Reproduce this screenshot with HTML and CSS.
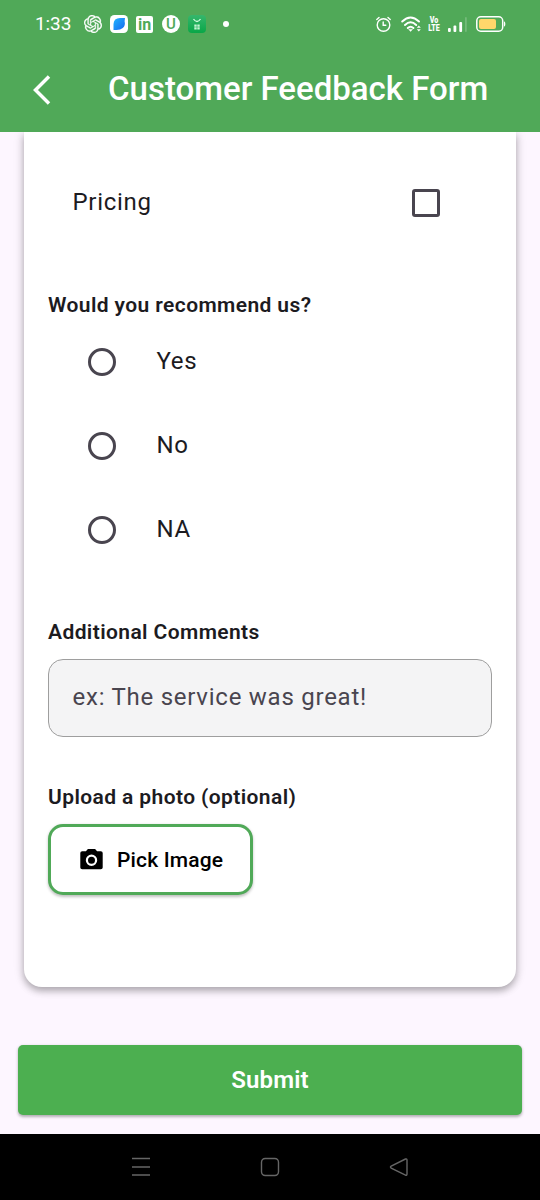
FILE: index.html
```html
<!DOCTYPE html>
<html lang="en">
<head>
<meta charset="utf-8">
<title>Customer Feedback Form</title>
<link rel="stylesheet" href="styles.css">
</head>
<body>
<header class="top">
  <div class="status">
    <span class="clock">1:33</span>
    <div class="notifications">
      <svg width="18" height="18" viewBox="0 0 24 24" fill="#fff" stroke="#fff" stroke-width=".35">
        <path d="M22.2819 9.8211a5.9847 5.9847 0 0 0-.5157-4.9108 6.0462 6.0462 0 0 0-6.5098-2.9A6.0651 6.0651 0 0 0 4.9807 4.1818a5.9847 5.9847 0 0 0-3.9977 2.9 6.0462 6.0462 0 0 0 .7427 7.0966 5.98 5.98 0 0 0 .511 4.9107 6.051 6.051 0 0 0 6.5146 2.9001A5.9847 5.9847 0 0 0 13.2599 24a6.0557 6.0557 0 0 0 5.7718-4.2058 5.9894 5.9894 0 0 0 3.9977-2.9001 6.0557 6.0557 0 0 0-.7475-7.0729zm-9.022 12.6081a4.4755 4.4755 0 0 1-2.8764-1.0408l.1419-.0804 4.7783-2.7582a.7948.7948 0 0 0 .3927-.6813v-6.7369l2.02 1.1686a.071.071 0 0 1 .038.052v5.5826a4.504 4.504 0 0 1-4.4945 4.4944zm-9.6607-4.1254a4.4708 4.4708 0 0 1-.5346-3.0137l.142.0852 4.783 2.7582a.7712.7712 0 0 0 .7806 0l5.8428-3.3685v2.3324a.0804.0804 0 0 1-.0332.0615L9.74 19.9502a4.4992 4.4992 0 0 1-6.1408-1.6464zM2.3408 7.8956a4.485 4.485 0 0 1 2.3655-1.9728V11.6a.7664.7664 0 0 0 .3879.6765l5.8144 3.3543-2.0201 1.1685a.0757.0757 0 0 1-.071 0l-4.8303-2.7865A4.504 4.504 0 0 1 2.3408 7.872zm16.5963 3.8558L13.1038 8.364 15.1192 7.2a.0757.0757 0 0 1 .071 0l4.8303 2.7913a4.4944 4.4944 0 0 1-.6765 8.1042v-5.6772a.79.79 0 0 0-.407-.667zm2.0107-3.0231l-.142-.0852-4.7735-2.7818a.7759.7759 0 0 0-.7854 0L9.409 9.2297V6.8974a.0662.0662 0 0 1 .0284-.0615l4.8303-2.7866a4.4992 4.4992 0 0 1 6.6802 4.66zM8.3065 12.863l-2.02-1.1638a.0804.0804 0 0 1-.038-.0567V6.0742a4.4992 4.4992 0 0 1 7.3757-3.4537l-.142.0805L8.704 5.459a.7948.7948 0 0 0-.3927.6813zm1.0976-2.3654l2.602-1.4998 2.6069 1.4998v2.9994l-2.5974 1.4997-2.6067-1.4997Z"/>
      </svg>
      <svg width="18" height="18" viewBox="0 0 18 18">
        <defs><linearGradient id="blue" x1="0" y1="0" x2="1" y2="1"><stop offset="0" stop-color="#20b5ff"/><stop offset="1" stop-color="#1668ee"/></linearGradient></defs>
        <rect width="18" height="18" rx="4.5" fill="#fff"/><path d="M3.500 15V9Q3.800 3.200 10 3h5l-.4 3.200q1.100 4.200-1.800 6.800-2.300 2-6.300 2z" fill="url(#blue)"/>
      </svg>
      <span class="badge linked">in</span>
      <span class="badge round">U</span>
      <svg width="18" height="18" viewBox="0 0 18 18">
        <defs><linearGradient id="green" x2="0" y2="1"><stop stop-color="#36b66c"/><stop offset="1" stop-color="#08a747"/></linearGradient></defs>
        <rect width="18" height="18" rx="4" fill="url(#green)"/><path d="M5.500 4q3.500 5 7 0" fill="none" stroke="#d9ffe4" stroke-width="1.300"/><path d="M6.300 9.500h2.400v2.200H6.300zm3 0h2.400v2.200H9.300zm-3 2.700h2.400v2.200H6.300zm3 0h2.400v2.200H9.300z" fill="#c5f5d3"/>
      </svg>
      <i class="dot"></i>
    </div>
    <div class="system">
      <svg class="alarm" width="16" height="17" viewBox="0 0 16 17" fill="none" stroke="#fff" stroke-width="1.400" stroke-linecap="round"><circle cx="7.500" cy="9" r="6.300"/><path d="M.8 3.500 3 1.500M14.200 3.500 12 1.500M7.200 6v3.300h2.600"/></svg>
      <svg class="wifi" width="21" height="17" viewBox="0 0 21 17" fill="none" stroke="#fff" stroke-width="1.900" stroke-linecap="round"><path d="M1.200 5.500q8.300-8 16.800 0M4 9q5.600-5.300 11.200 0M6.800 12q2.800-2.600 5.600 0"/><path d="m8 13.600 1.600 1.800 1.600-1.800z" fill="#fff" stroke-width=".6"/><path d="m15.800 11.800 2-2.400 2 2.400zm0 1.400 2 2.400 2-2.400z" fill="#fff" stroke="none"/></svg>
      <span class="volte">Vo<br>LTE</span>
      <svg class="signal" width="19" height="17" viewBox="0 0 19 17" fill="#fff"><rect y="12" width="2.800" height="4" rx="1"/><rect x="5.500" y="9.500" width="2.800" height="6.500" rx="1"/><rect x="11.300" y="6" width="2.800" height="10" rx="1"/><rect x="17" y="1" width="1.800" height="15" rx=".9" opacity=".2"/></svg>
      <svg class="battery" width="30" height="16" viewBox="0 0 30 16"><rect x=".8" y=".8" width="25.900" height="14.400" rx="4" fill="none" stroke="#fff" stroke-width="1.500"/><rect x="3" y="3" width="17" height="10" rx="2" fill="#ffd76b"/><path d="M28 5.300q1.400.5 1.400 2.700T28 10.700z" fill="#fff"/></svg>
    </div>
  </div>
  <div class="appbar">
    <svg class="back" width="20" height="32" viewBox="0 0 20 32" fill="none" stroke="#fff" stroke-width="3.500"><path d="M17 2.600 3.500 16 17 29.400"/></svg>
    <h1>Customer Feedback Form</h1>
  </div>
</header>
<main>
  <section class="card">
    <label class="pricing"><span>Pricing</span><i class="checkbox"></i></label>
    <h2 class="recommend">Would you recommend us?</h2>
    <div class="options">
      <label><i class="radio"></i><span>Yes</span></label>
      <label><i class="radio"></i><span>No</span></label>
      <label><i class="radio"></i><span>NA</span></label>
    </div>
    <h2 class="comments-title">Additional Comments</h2>
    <div class="comments">ex: The service was great!</div>
    <h2 class="upload-title">Upload a photo (optional)</h2>
    <button class="pick"><svg width="24" height="22" viewBox="0 0 24 22"><path fill="#000" fill-rule="evenodd" d="M8.900 0h7.200l2 2.200h3.700q1.900 0 1.900 1.800v14.500q0 1.800-1.900 1.800H3.200q-1.900 0-1.900-1.800V4q0-1.800 1.900-1.800h3.700zM12.500 5.500a5.700 5.700 0 1 0 0 11.400 5.700 5.700 0 0 0 0-11.400zm0 2.200a3.500 3.500 0 1 1 0 7 3.500 3.500 0 0 1 0-7z"/></svg><span>Pick Image</span></button>
  </section>
  <button class="submit">Submit</button>
</main>
<nav>
  <svg width="20" height="20" viewBox="0 0 20 20"><path d="M1 1.500h18M1 10h18M1 18h18"/></svg>
  <svg width="20" height="20" viewBox="0 0 20 20"><rect x="1.500" y="1.500" width="17" height="17" rx="3.700"/></svg>
  <svg width="20" height="20" viewBox="0 0 20 20"><path d="M16.500 2 2.200 9q-1.500 1.100 0 2.200l14.300 7q1.500.4 1.500-1.100v-14Q18 1.600 16.500 2z"/></svg>
</nav>
</body>
</html>
```
FILE: styles.css
```css
* { box-sizing: border-box; }
body { margin: 0; width: 540px; height: 1200px; display: flex; flex-direction: column; overflow: hidden; font-family: Roboto, sans-serif; background: #fdf6ff; color: #1c1b1f; }
h1, h2 { margin: 0; white-space: nowrap; }
svg, i { display: block; flex: none; }
button { font-family: inherit; }
.top { height: 132px; flex: none; background: #50a958; color: #fff; position: relative; z-index: 1; }
.status { height: 48px; padding: 0 34px 0 35px; display: flex; align-items: center; }
.clock { width: 49px; font-size: 19px; letter-spacing: -.1px; line-height: 24px; }
.notifications { display: flex; align-items: center; gap: 8px; }
.badge { width: 18px; height: 18px; background: #fff; color: #50a958; font-weight: 700; text-align: center; line-height: 18px; }
.linked { width: 17px; height: 17px; margin-right: 1px; border-radius: 2px; font-size: 16px; }
.round { border-radius: 50%; font-size: 15px; font-weight: 500; }
.dot { width: 6px; height: 6px; margin-left: 9px; border-radius: 50%; background: #fff; }
.system { margin-left: auto; display: flex; align-items: center; }
.wifi { margin-left: 9px; }
.volte { width: 16px; height: 17px; margin: 0 -2px 0 4px; font-size: 9.5px; font-weight: 900; line-height: 8.5px; text-align: center; transform: scaleX(.75); }
.signal { margin-left: 8px; }
.battery { margin-left: 9px; }
.appbar { height: 84px; padding-left: 32px; display: flex; align-items: center; }
h1 { margin-left: 56px; margin-top: -2px; font-size: 33px; font-weight: 500; line-height: 42px; }
main { height: 1002px; flex: none; display: flex; flex-direction: column; }
.card { width: 492px; height: 855px; flex: none; margin: 0 24px; padding: 34px 24px 0; display: flex; flex-direction: column; background: #fff; border-radius: 0 0 18px 18px; box-shadow: 0 4px 7px rgba(0,0,0,.25), 0 1px 12px rgba(0,0,0,.14); }
.pricing { height: 72px; padding: 0 52px 0 24.5px; display: flex; align-items: center; justify-content: space-between; font-size: 24px; letter-spacing: .7px; }
.checkbox { width: 28px; height: 28px; margin-top: 1px; border: 3px solid #49454f; border-radius: 3px; }
h2 { font-size: 21px; font-weight: 600; line-height: 30px; letter-spacing: .4px; }
.recommend { height: 29px; margin-top: 52px; }
.options label { height: 84px; padding-left: 40px; display: flex; align-items: center; gap: 40.5px; font-size: 24px; letter-spacing: .7px; }
.radio { width: 28px; height: 28px; margin-top: 1px; border: 3px solid #49454f; border-radius: 50%; }
.comments-title { margin-top: 46px; }
.comments { height: 78px; flex: none; margin-top: 11.5px; padding: 0 23.5px 2px; display: flex; align-items: center; font-size: 24px; letter-spacing: .75px; color: #49454f; border: 1.5px solid #9e9e9e; border-radius: 15px; background: #f4f4f5; }
.upload-title { margin-top: 45.5px; }
.pick { width: 205px; height: 71px; flex: none; margin-top: 12px; padding: 0 28px; display: flex; align-items: center; gap: 14px; border: 3px solid #50a958; border-radius: 15px; background: #fff; color: #000; font-size: 21px; font-weight: 500; letter-spacing: .15px; white-space: nowrap; box-shadow: 0 1.5px 3px rgba(0,0,0,.25); }
.submit { width: 504px; height: 70px; margin: 58px 18px 0; padding: 0; border: 0; border-radius: 5px; background: #4caf50; color: #fff; font-size: 24px; font-weight: 600; letter-spacing: .15px; box-shadow: 0 1.5px 3px rgba(0,0,0,.3); }
nav { height: 66px; flex: none; padding: 0 131px; display: flex; align-items: center; justify-content: space-between; background: #000; }
nav svg { fill: none; stroke: #666; stroke-width: 1.4; }
```
